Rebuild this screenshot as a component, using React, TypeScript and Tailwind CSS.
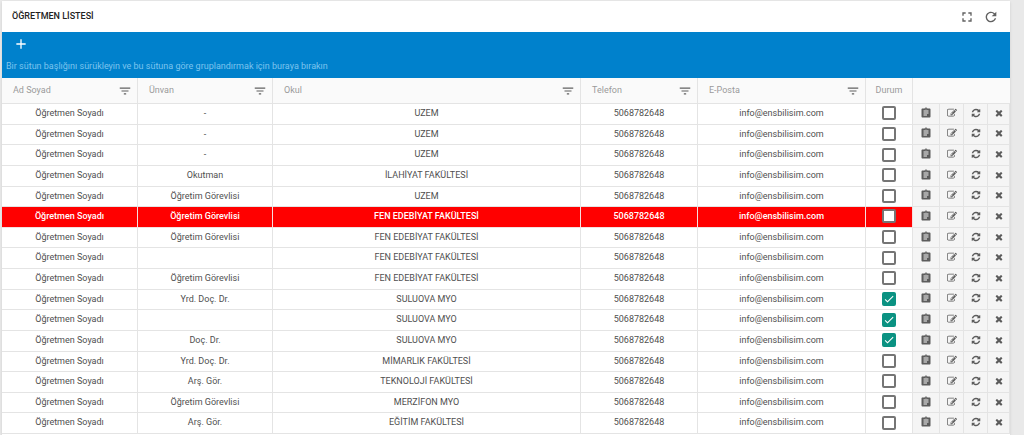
import { MdAdd, MdAssignment, MdCheck, MdFilterList, MdFullscreen, MdRefresh } from "react-icons/md"

type Teacher = {
  title: string
  school: string
  active?: boolean
  highlighted?: boolean
}

const teachers: Teacher[] = [
  { title: "-", school: "UZEM" },
  { title: "-", school: "UZEM" },
  { title: "-", school: "UZEM" },
  { title: "Okutman", school: "İLAHİYAT FAKÜLTESİ" },
  { title: "Öğretim Görevlisi", school: "UZEM" },
  { title: "Öğretim Görevlisi", school: "FEN EDEBİYAT FAKÜLTESİ", highlighted: true },
  { title: "Öğretim Görevlisi", school: "FEN EDEBİYAT FAKÜLTESİ" },
  { title: "", school: "FEN EDEBİYAT FAKÜLTESİ" },
  { title: "Öğretim Görevlisi", school: "FEN EDEBİYAT FAKÜLTESİ" },
  { title: "Yrd. Doç. Dr.", school: "SULUOVA MYO", active: true },
  { title: "", school: "SULUOVA MYO", active: true },
  { title: "Doç. Dr.", school: "SULUOVA MYO", active: true },
  { title: "Yrd. Doç. Dr.", school: "MİMARLIK FAKÜLTESİ" },
  { title: "Arş. Gör.", school: "TEKNOLOJİ FAKÜLTESİ" },
  { title: "Öğretim Görevlisi", school: "MERZİFON MYO" },
  { title: "Arş. Gör.", school: "EĞİTİM FAKÜLTESİ" },
]

const columns = ["Ad Soyad", "Ünvan", "Okul", "Telefon", "E-Posta"]

const editPath =
  "M888 1184l116-116-152-152-116 116v56h96v96h56zm440-720q-16-16-33 1l-350 350q-17 17-1 33t33-1l350-350q17-17 1-33zm80 594v190q0 119-84.5 203.5t-203.5 84.5h-832q-119 0-203.5-84.5t-84.5-203.5v-832q0-119 84.5-203.5t203.5-84.5h832q63 0 117 25 15 7 18 23 3 17-9 29l-49 49q-14 14-32 8-23-6-45-6h-832q-66 0-113 47t-47 113v832q0 66 47 113t113 47h832q66 0 113-47t47-113v-126q0-13 9-22l64-64q15-15 35-7t20 29zm-96-738l288 288-672 672h-288v-288zm444 132l-92 92-288-288 92-92q28-28 68-28t68 28l152 152q28 28 28 68t-28 68z"
const syncPath =
  "M1639 1056q0 5-1 7-64 268-268 434.5t-478 166.5q-146 0-282.5-55t-243.5-157l-129 129q-19 19-45 19t-45-19-19-45v-448q0-26 19-45t45-19h448q26 0 45 19t19 45-19 45l-137 137q71 66 161 102t187 36q134 0 250-65t186-179q11-17 53-117 8-23 30-23h192q13 0 22.5 9.5t9.5 22.5zm25-800v448q0 26-19 45t-45 19h-448q-26 0-45-19t-19-45 19-45l138-138q-148-137-349-137-134 0-250 65t-186 179q-11 17-53 117-8 23-30 23h-199q-13 0-22.5-9.5t-9.5-22.5v-7q65-268 270-434.5t480-166.5q146 0 284 55.5t245 156.5l130-129q19-19 45-19t45 19 19 45z"
const closePath =
  "M1490 1322q0 40-28 68l-136 136q-28 28-68 28t-68-28l-294-294-294 294q-28 28-68 28t-68-28l-136-136q-28-28-28-68t28-68l294-294-294-294q-28-28-28-68t28-68l136-136q28-28 68-28t68 28l294 294 294-294q28-28 68-28t68 28l136 136q28 28 28 68t-28 68l-294 294 294 294q28 28 28 68z"

function Glyph({ path }: { path: string }) {
  return (
    <svg viewBox="0 0 1792 1792" className="size-[10px]" fill="currentColor" aria-hidden="true">
      <path d={path} />
    </svg>
  )
}

const actions = [
  { label: "Detay", icon: <MdAssignment className="size-3" /> },
  { label: "Düzenle", icon: <Glyph path={editPath} /> },
  { label: "Yenile", icon: <Glyph path={syncPath} /> },
  { label: "Sil", icon: <Glyph path={closePath} /> },
]

function StatusCheckbox({ checked, label }: { checked?: boolean; label: string }) {
  return (
    <label className="grid place-items-center pb-px">
      <input
        type="checkbox"
        aria-label={label}
        defaultChecked={checked}
        className="peer col-start-1 row-start-1 size-[14px] appearance-none rounded-[2px] border-2 border-[#757575] bg-white checked:border-[#0b9282] checked:bg-[#0b9282]"
      />
      <MdCheck className="pointer-events-none invisible col-start-1 row-start-1 size-3 text-white peer-checked:visible" />
    </label>
  )
}

function TeacherRow({ teacher, index }: { teacher: Teacher; index: number }) {
  const cell = teacher.highlighted
    ? "border-r border-b border-[#f5dede] bg-[#ff0000] p-0 font-medium text-white"
    : "border-r border-b border-[#e4e4e4] p-0"

  return (
    <tr>
      <td className={cell}>Öğretmen Soyadı</td>
      <td className={cell}>{teacher.title}</td>
      <td className={cell}>{teacher.school}</td>
      <td className={cell}>5068782648</td>
      <td className={cell}>info@ensbilisim.com</td>
      <td className={cell}>
        <StatusCheckbox checked={teacher.active} label={`Durum ${index + 1}`} />
      </td>
      {actions.map((action) => (
        <td key={action.label} className="border-r border-b border-[#e4e4e4] bg-[#f5f5f5] p-0 text-[#5c5c5c]">
          <button type="button" aria-label={action.label} className="flex w-full items-center justify-center pb-[2px]">
            {action.icon}
          </button>
        </td>
      ))}
    </tr>
  )
}

export default function App() {
  return (
    <main className="flex h-screen flex-col bg-[#e9e9e9] pt-px pr-[14px] pl-[2px] font-[Roboto,sans-serif] text-[9px] text-[#4f4f4f]">
      <section className="flex grow flex-col bg-white pb-px shadow-sm">
        <header className="flex h-[31px] shrink-0 items-center justify-between pr-[11px] pl-[10px]">
          <h1 className="font-medium text-[#212121]">ÖĞRETMEN LİSTESİ</h1>
          <div className="flex items-center gap-2 text-[#616161]">
            <button type="button" aria-label="Tam ekran">
              <MdFullscreen className="size-4" />
            </button>
            <button type="button" aria-label="Yenile">
              <MdRefresh className="size-4" />
            </button>
          </div>
        </header>

        {/* Toolbar and grouping area */}
        <div className="flex h-[46px] shrink-0 flex-col justify-between bg-[#0081cc] px-1 pt-1 pb-[5px]">
          <button type="button" aria-label="Ekle" className="ml-[7px] self-start text-white">
            <MdAdd className="size-4" />
          </button>
          <p className="text-[#7cc4ee]">
            Bir sütun başlığını sürükleyin ve bu sütuna göre gruplandırmak için buraya bırakın
          </p>
        </div>

        <table className="w-full grow table-fixed border-separate border-spacing-0 text-center">
          <colgroup>
            <col className="w-[136px]" />
            <col className="w-[135px]" />
            <col />
            <col className="w-[117px]" />
            <col className="w-[168px]" />
            <col className="w-[47px]" />
            <col className="w-[27px]" />
            <col className="w-6" />
            <col className="w-6" />
            <col className="w-[22px]" />
          </colgroup>
          <thead className="bg-[#fafafa] text-[#9b9b9b]">
            <tr className="h-[26px]">
              {columns.map((name) => (
                <th key={name} className="border-r border-b border-[#e4e4e4] p-0 font-normal">
                  <div className="flex items-center justify-between pr-[5px] pl-[11px]">
                    {name}
                    <button type="button" aria-label={`${name} filtrele`} className="text-[#616161]">
                      <MdFilterList className="size-[14px]" />
                    </button>
                  </div>
                </th>
              ))}
              <th className="border-r border-b border-[#e4e4e4] p-0 font-normal">Durum</th>
              <th colSpan={4} className="border-b border-[#e4e4e4] p-0" aria-label="İşlemler"></th>
            </tr>
          </thead>
          <tbody>
            {teachers.map((teacher, index) => (
              <TeacherRow key={index} teacher={teacher} index={index} />
            ))}
          </tbody>
        </table>
      </section>
    </main>
  )
}
